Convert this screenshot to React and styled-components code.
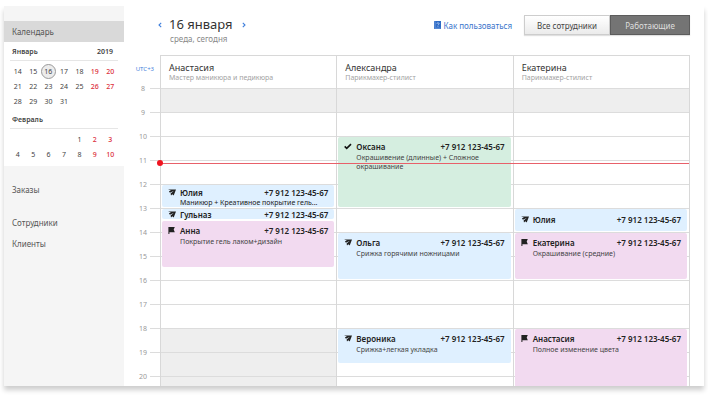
import React from 'react';
import styled, { createGlobalStyle, css } from 'styled-components';

const GlobalStyle = createGlobalStyle`
  *, *::before, *::after { box-sizing: border-box; }
  body {
    margin: 0;
    background: #fff;
    color: #333;
    font: 8px/11px "Noto Sans", "Open Sans", sans-serif;
  }
  button { font: inherit; }
`;

const Page = styled.div`
  display: flow-root;
`;

const Window = styled.div`
  display: flex;
  height: calc(100vh - 20px);
  margin: 6px 4px 14px;
  overflow: hidden;
  background: #fff;
  box-shadow: 0 4px 5px rgba(0, 0, 0, 0.2);
  clip-path: inset(0 -4px -14px -4px);
`;

/* Sidebar */
const Sidebar = styled.aside`
  flex: 0 0 120px;
  padding-top: 15px;
  background: #f5f5f5;
`;

const NavLink = styled.a`
  display: flex;
  align-items: center;
  height: 21px;
  padding-left: 8px;
  color: #555;
  text-decoration: none;
  background: ${(p) => (p.$active ? '#d9d9d9' : 'transparent')};
`;

const NavGroup = styled.nav`
  margin-top: ${(p) => (p.$first ? '13px' : '12px')};
`;

const MiniCalendar = styled.div`
  padding: 1px 6px 2px;
  background: #fff;
`;

const MonthTitle = styled.h3`
  display: flex;
  align-items: center;
  justify-content: space-between;
  height: 18px;
  margin: 0;
  padding: 0 5px 0 2px;
  border-bottom: 1px solid #e6e6e6;
  font-size: 7px;
  font-weight: 600;
  color: #444;
`;

const MonthTable = styled.table`
  width: 100%;
  margin: 3px 0 2px;
  border-collapse: collapse;
  table-layout: fixed;
`;

const DayCell = styled.td`
  height: 15px;
  padding: 0;
  text-align: center;
  font-size: 7px;
  line-height: 13px;
  color: ${(p) => (p.$weekend ? '#dc2f3c' : '#444')};
  font-weight: ${(p) => (p.$weekend ? 500 : 400)};
`;

const Today = styled.span`
  display: block;
  width: 15px;
  height: 15px;
  border: 1px solid #999;
  border-radius: 50%;
  background: #ececec;
`;

/* Main area */
const Main = styled.main`
  flex: 1;
  display: flex;
  flex-direction: column;
  min-width: 0;
  padding-right: 14px;
`;

const Header = styled.header`
  display: flex;
  align-items: flex-start;
  height: 49px;
  flex: none;
  padding: 9px 0 0 32px;
`;

const DateBlock = styled.div`
  display: grid;
  grid-template-columns: 13px auto 16px;
  align-items: center;
`;

const DateTitle = styled.h1`
  margin: 0;
  font-size: 13px;
  line-height: 18px;
  font-weight: 400;
  color: #333;
`;

const DateNote = styled.p`
  grid-column: 2;
  margin: 0;
  padding-left: 1px;
  line-height: 12px;
  color: #888;
`;

const ArrowButton = styled.button`
  display: flex;
  align-items: center;
  justify-content: ${(p) => (p.$next ? 'flex-end' : 'flex-start')};
  height: 14px;
  margin-top: 2px;
  padding: 0 3px 0 2px;
  border: 0;
  background: none;
`;

const HelpLink = styled.a`
  display: flex;
  align-items: center;
  gap: 3px;
  height: 20px;
  margin: 0 12px 0 auto;
  color: #3a74cb;
  text-decoration: none;
`;

const Toggle = styled.div`
  display: flex;
  box-shadow: 0 1px 1px rgba(0, 0, 0, 0.12);
`;

const ToggleButton = styled.button`
  height: 20px;
  width: ${(p) => (p.$on ? '80px' : '86px')};
  padding: 0;
  border: 1px solid #cdcdcd;
  background: linear-gradient(#fff, #ebebeb);
  color: #444;
  ${(p) => p.$on && css`
    border-color: #5c5c5c;
    background: #747474;
    color: #dedede;
  `}
`;

const Schedule = styled.div`
  flex: 1;
  display: grid;
  grid-template-columns: 36px 1fr;
  min-height: 0;
`;

const Axis = styled.div`
  color: #999;
`;

const Zone = styled.div`
  height: 21px;
  padding: 8px 6px 0 0;
  text-align: right;
  font-size: 6px;
  line-height: 12px;
  color: #3f7fdc;
`;

const HourLabel = styled.div`
  display: flex;
  align-items: center;
  height: 24px;
  font-size: 7px;

  span { flex: 1; padding-right: 3px; text-align: right; }
  span.single { padding-right: 5px; }
  &::after { content: ''; width: 10px; height: 1px; margin-top: 1px; background: #dcdcdc; }
`;

const Board = styled.div`
  position: relative;
  display: grid;
  grid-template-columns: repeat(3, 1fr);
  border-top: 1px solid #d8d8d8;
  border-right: 1px solid #d8d8d8;
`;

const Column = styled.section`
  min-width: 0;
  border-left: 1px solid #d8d8d8;
`;

const Person = styled.header`
  height: 32px;
  padding: 6px 0 0 8px;

  h2 { margin: 0; font-size: 9px; line-height: 11px; font-weight: 400; color: #333; }
  p { margin: 0; font-size: 7px; line-height: 9px; color: #a3a3a3; white-space: nowrap; }
`;

const Slots = styled.div`
  display: grid;
  grid-template-columns: minmax(0, 1fr);
  grid-template-rows: repeat(25, 12px);
`;

const HourSlot = styled.div`
  grid-area: ${(p) => p.$row} / 1 / span 2 / 2;
  border-top: 1px solid #dcdcdc;
  background: ${(p) => (p.$closed ? '#eee' : 'transparent')};
`;

const Card = styled.article`
  grid-area: ${(p) => p.$from} / 1 / ${(p) => p.$to} / 2;
  z-index: 1;
  display: grid;
  grid-template-columns: 12px 1fr auto;
  align-content: start;
  margin: 1px 2px 1px 1px;
  padding: ${(p) => p.$pad}px 6px 0 6px;
  border-radius: 2px;
  background: ${(p) => p.$color};
  color: #222;
  white-space: nowrap;

  svg { align-self: center; }
  strong { font-weight: 600; }
  p {
    grid-column: 2 / 4;
    margin: ${(p) => (p.$pad > 2 ? '1px' : '0')} 0 0;
    font-size: 7px;
    line-height: 9px;
    white-space: pre-line;
    color: ${(p) => (p.$pad > 2 ? '#444' : '#222')};
  }
`;

const NowLine = styled.div`
  position: absolute;
  z-index: 2;
  top: 107px;
  left: 0;
  right: 0;
  height: 1px;
  background: #e8606a;

  &::before {
    content: '';
    position: absolute;
    top: -3px;
    left: -3px;
    width: 6px;
    height: 6px;
    border-radius: 50%;
    background: #f01420;
  }
`;

const Chevron = ({ next }) => (
  <svg width="4" height="6" viewBox="0 0 4 6" fill="none" stroke="#3f7fdc" strokeWidth="1.1" aria-hidden="true">
    <path d={next ? 'M.8 .8 3 3 .8 5.2' : 'M3.2 .8 1 3 3.2 5.2'} />
  </svg>
);

const BookIcon = () => (
  <svg width="7" height="8" viewBox="0 0 7 8" aria-hidden="true">
    <path d="M1 0h6v8H1C.4 8 0 7.6 0 7V1C0 .4.4 0 1 0Z" fill="#2e6bc6" />
    <path d="M1 .5v6.2M1 7.2h5.5" stroke="#a9c6ef" strokeWidth=".5" />
    <path d="M2.9 2.7c0-1.3 2.2-1.2 2.2 0 0 .8-1.1.8-1.1 1.7M4 5.1v.7" fill="none" stroke="#dce8f9" strokeWidth=".7" />
  </svg>
);

const icons = {
  plane: (
    <svg width="8" height="7" viewBox="0 0 8 7" fill="#222" aria-hidden="true">
      <path d="M0 .4h8L5.700 6.600 4.300 5.300 3 6.400 2.600 4.500 5.900 1.800 1.900 3.700.9 2.300 3 1.500Z" />
    </svg>
  ),
  flag: (
    <svg width="8" height="7" viewBox="0 0 8 7" fill="#222" aria-hidden="true">
      <path d="M.4 0h6.400L5.700 2.600 6.800 5.200H1.400V7h-1Z" />
    </svg>
  ),
  check: (
    <svg width="8" height="7" viewBox="0 0 8 7" fill="none" stroke="#111" strokeWidth="1.6" aria-hidden="true">
      <path d="M.7 3.4 2.7 5.3 7 1.1" />
    </svg>
  ),
};

const BLUE = '#dff0ff';
const PINK = '#f2daf0';
const GREEN = '#d5eee0';
const PHONE = '+7 912 123-45-67';

const staff = [
  {
    name: 'Анастасия',
    role: 'Мастер маникюра и педикюра',
    closed: [8, 18, 19, 20],
    visits: [
      { from: 12, to: 13, icon: 'plane', color: BLUE, pad: 2, name: 'Юлия', note: 'Маникюр + Креативное покрытие гель...' },
      { from: 13, to: 13.5, icon: 'plane', color: BLUE, pad: 0, name: 'Гульназ' },
      { from: 13.5, to: 15.5, icon: 'flag', color: PINK, pad: 4, name: 'Анна', note: 'Покрытие гель лаком+дизайн' },
    ],
  },
  {
    name: 'Александра',
    role: 'Парикмахер-стилист',
    closed: [8],
    visits: [
      { from: 10, to: 13, icon: 'check', color: GREEN, pad: 4, name: 'Оксана', note: 'Окрашивение (длинные) + Сложное\nокрашивание' },
      { from: 14, to: 16, icon: 'plane', color: BLUE, pad: 4, name: 'Ольга', note: 'Срижка горячими ножницами' },
      { from: 18, to: 19.5, icon: 'plane', color: BLUE, pad: 4, name: 'Вероника', note: 'Срижка+легкая укладка' },
    ],
  },
  {
    name: 'Екатерина',
    role: 'Парикмахер-стилист',
    closed: [8],
    visits: [
      { from: 13, to: 14, icon: 'plane', color: BLUE, pad: 5, name: 'Юлия' },
      { from: 14, to: 16, icon: 'flag', color: PINK, pad: 4, name: 'Екатерина', note: 'Окрашивание (средние)' },
      { from: 18, to: 20.5, icon: 'flag', color: PINK, pad: 4, name: 'Анастасия', note: 'Полное изменение цвета' },
    ],
  },
];

const hours = Array.from({ length: 13 }, (_, i) => i + 8);
const rowOf = (time) => (time - 8) * 2 + 1;

const january = [
  [14, 15, 16, 17, 18, 19, 20],
  [21, 22, 23, 24, 25, 26, 27],
  [28, 29, 30, 31, null, null, null],
];
const february = [
  [null, null, null, null, 1, 2, 3],
  [4, 5, 6, 7, 8, 9, 10],
];

const Month = ({ title, year, weeks, today }) => (
  <>
    <MonthTitle><span>{title}</span>{year && <span>{year}</span>}</MonthTitle>
    <MonthTable aria-label={title}>
      <tbody>
        {weeks.map((week, w) => (
          <tr key={w}>
            {week.map((day, d) => (
              <DayCell key={d} $weekend={d > 4}>
                {day && day === today ? <Today>{day}</Today> : day}
              </DayCell>
            ))}
          </tr>
        ))}
      </tbody>
    </MonthTable>
  </>
);

export default function App() {
  return (
    <Page>
      <GlobalStyle />
      <Window>
        <Sidebar>
          <NavLink href="#calendar" $active>Календарь</NavLink>
          <MiniCalendar>
            <Month title="Январь" year="2019" weeks={january} today={16} />
            <Month title="Февраль" weeks={february} />
          </MiniCalendar>
          <NavGroup $first><NavLink href="#orders">Заказы</NavLink></NavGroup>
          <NavGroup>
            <NavLink href="#staff">Сотрудники</NavLink>
            <NavLink href="#clients">Клиенты</NavLink>
          </NavGroup>
        </Sidebar>
        <Main>
          <Header>
            <DateBlock>
              <ArrowButton aria-label="Предыдущий день"><Chevron /></ArrowButton>
              <DateTitle>16 января</DateTitle>
              <ArrowButton $next aria-label="Следующий день"><Chevron next /></ArrowButton>
              <DateNote>среда, сегодня</DateNote>
            </DateBlock>
            <HelpLink href="#help"><BookIcon />Как пользоваться</HelpLink>
            <Toggle>
              <ToggleButton aria-pressed="false">Все сотрудники</ToggleButton>
              <ToggleButton $on aria-pressed="true">Работающие</ToggleButton>
            </Toggle>
          </Header>
          <Schedule>
            <Axis>
              <Zone>UTC+3</Zone>
              {hours.map((h) => (
                <HourLabel key={h}><span className={h < 10 ? 'single' : undefined}>{h}</span></HourLabel>
              ))}
            </Axis>
            <Board>
              {staff.map((person) => (
                <Column key={person.name}>
                  <Person>
                    <h2>{person.name}</h2>
                    <p>{person.role}</p>
                  </Person>
                  <Slots>
                    {hours.map((h) => (
                      <HourSlot key={h} $row={rowOf(h)} $closed={person.closed.includes(h)} />
                    ))}
                    {person.visits.map((v) => (
                      <Card key={v.from} $from={rowOf(v.from)} $to={rowOf(v.to)} $color={v.color} $pad={v.pad}>
                        {icons[v.icon]}
                        <strong>{v.name}</strong>
                        <strong>{PHONE}</strong>
                        {v.note && <p>{v.note}</p>}
                      </Card>
                    ))}
                  </Slots>
                </Column>
              ))}
              <NowLine />
            </Board>
          </Schedule>
        </Main>
      </Window>
    </Page>
  );
}
